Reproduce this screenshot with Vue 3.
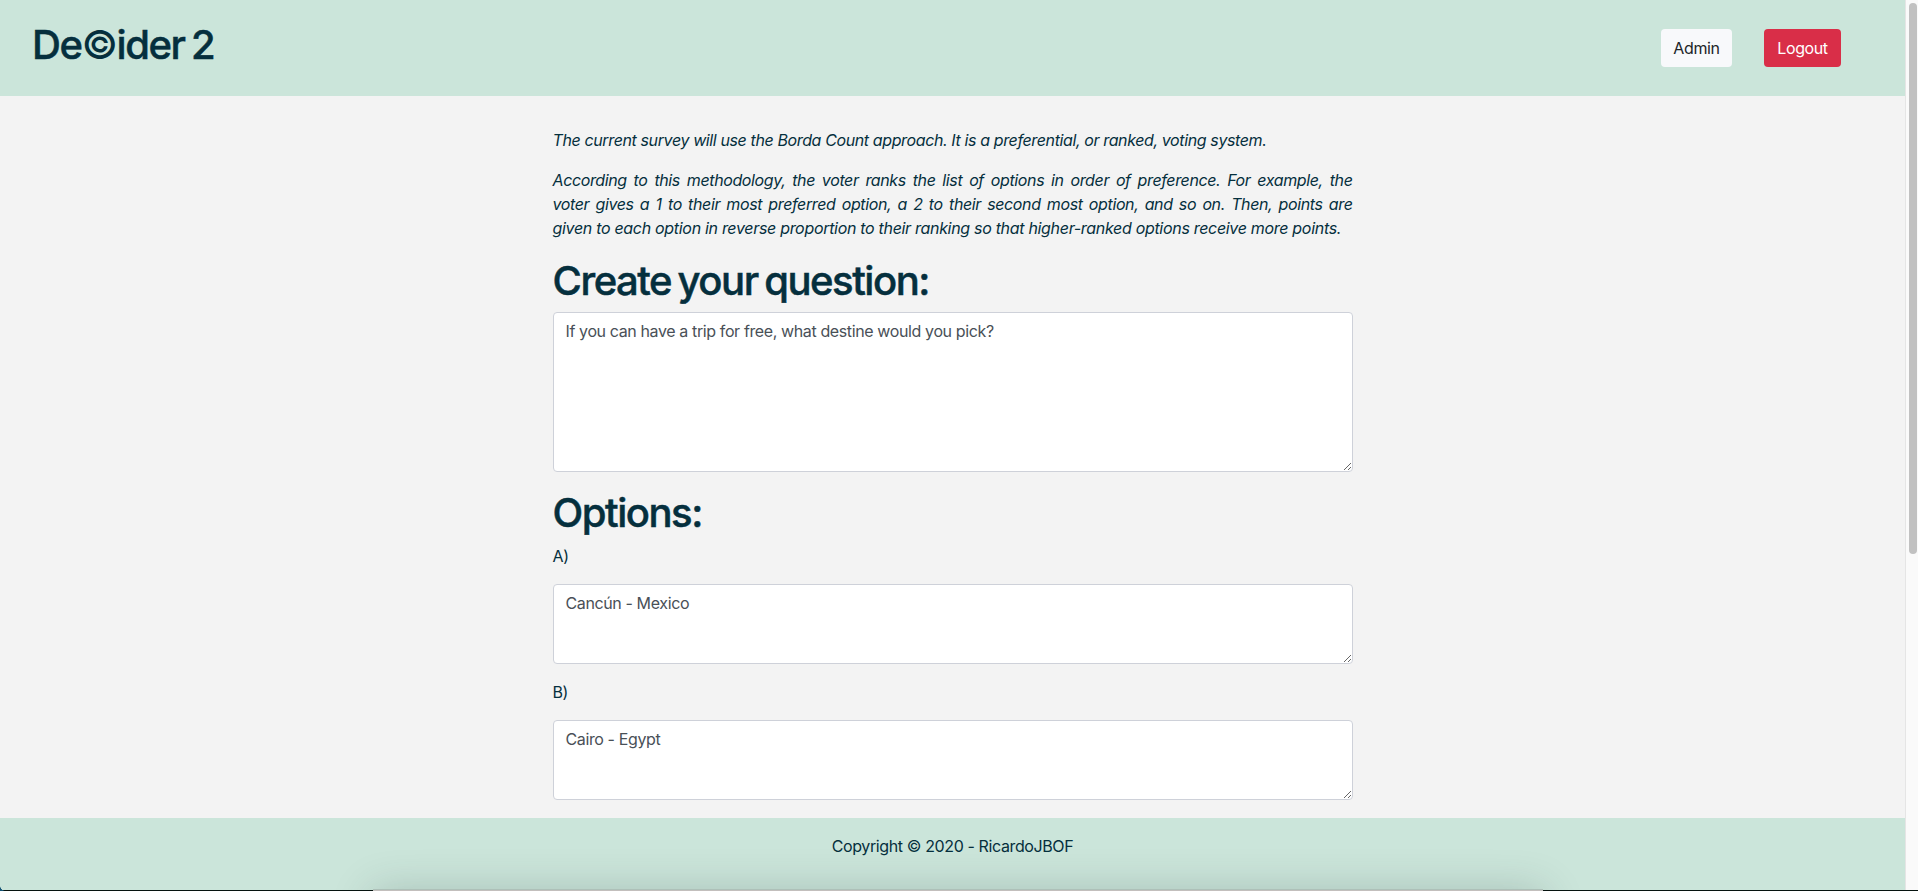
<script setup>
import { ref } from 'vue'

const question = ref('If you can have a trip for free, what destine would you pick?')
const options = ref([
  { label: 'A)', text: 'Cancún - Mexico' },
  { label: 'B)', text: 'Cairo - Egypt' },
])
</script>

<template>
  <div class="window">
    <div class="page">
      <header class="header">
        <h1 class="brand">De<span class="mark">©</span>ider 2</h1>
        <nav class="actions">
          <button class="btn btn-light"><span>Admin</span></button>
          <button class="btn btn-danger"><span>Logout</span></button>
        </nav>
      </header>
      <main class="content">
        <p class="intro">The current survey will use the Borda Count approach. It is a preferential, or ranked, voting system.</p>
        <p class="intro">
          <span class="line">According to this methodology, the voter ranks the list of options in order of preference. For example, the</span>
          <span class="line">voter gives a 1 to their most preferred option, a 2 to their second most option, and so on. Then, points are</span>
          <span class="line last">given to each option in reverse proportion to their ranking so that higher-ranked options receive more points.</span>
        </p>
        <h1 class="heading">Create your question:</h1>
        <textarea v-model="question" class="field field-large"></textarea>
        <h1 class="heading">Options:</h1>
        <template v-for="option in options" :key="option.label">
          <p class="label">{{ option.label }}</p>
          <textarea v-model="option.text" class="field"></textarea>
        </template>
      </main>
      <footer class="footer"><p>Copyright © 2020 - RicardoJBOF</p></footer>
    </div>
    <div class="track"><div class="thumb"></div></div>
    <div class="dock"></div>
    <div class="edge"></div>
    <div class="dock-top"></div>
    <div class="corner"></div>
  </div>
</template>

<style>
html,
body {
  overflow: hidden;
}
</style>

<style scoped>
* {
  box-sizing: border-box;
}
.window {
  position: relative;
  display: flex;
  width: 100vw;
  height: 891px;
  overflow: hidden;
  background: #f3f3f3;
  color: #052f3d;
  font-family: Inter, "Liberation Sans", sans-serif;
  font-size: 16px;
  line-height: 24px;
  letter-spacing: -0.38px;
}
.page {
  flex: 1;
  display: flex;
  flex-direction: column;
}
.header {
  display: flex;
  justify-content: space-between;
  align-items: center;
  height: 96px;
  padding: 0 64px 0 32px;
  background: #cbe5da;
}
h1,
p {
  margin: 0;
}
.brand,
.heading {
  font-size: 40px;
  font-weight: 500;
  line-height: 48px;
  letter-spacing: -1.45px;
  word-spacing: -2.8px;
  white-space: nowrap;
  -webkit-text-stroke: 0.5px currentColor;
}
.brand {
  padding-bottom: 6px;
}
.mark {
  -webkit-text-stroke: 0;
}
.actions {
  display: flex;
  gap: 32px;
}
.btn {
  height: 38px;
  padding: 0;
  border: 0;
  border-radius: 4px;
  font: inherit;
  letter-spacing: inherit;
}
.btn-light {
  width: 71px;
  background: #f8f9fb;
  color: #212529;
}
.btn-danger {
  width: 77px;
  background: #d92e48;
  color: #fff;
}
.content {
  display: flex;
  flex-direction: column;
  width: 800px;
  height: 722px;
  margin: 0 auto;
  padding-top: 32px;
}
.intro {
  margin-bottom: 16px;
  font-style: italic;
}
.line {
  display: block;
  white-space: nowrap;
  text-align: justify;
  text-align-last: justify;
}
.last {
  letter-spacing: -0.31px;
  text-align-last: left;
}
.heading {
  padding-top: 1px;
  margin-bottom: 7px;
}
.label {
  margin-bottom: 16px;
}
.field {
  display: block;
  flex: none;
  width: 100%;
  height: 80px;
  margin: 0 0 16px;
  padding: 6px 12px;
  border: 1px solid #ced1d9;
  border-radius: 4px;
  background: #fff;
  color: #495057;
  font: inherit;
  letter-spacing: inherit;
  resize: vertical;
}
.field-large {
  height: 160px;
}
.footer {
  flex: 1;
  padding-top: 16px;
  background: #cbe5da;
  text-align: center;
}
.track {
  width: 13px;
  padding: 3px 1px 0 3px;
  border-left: 1px solid #e5e5e5;
  background: #fafafa;
}
.thumb {
  height: 551px;
  border-radius: 4px;
  background: #c1c1c1;
}
.dock {
  position: absolute;
  top: 891px;
  left: 373px;
  width: 1170px;
  height: 60px;
  box-shadow: 0 0 42px rgba(40, 60, 60, 0.23);
}
.edge {
  position: absolute;
  left: 0;
  bottom: 0;
  width: 100%;
  height: 1px;
  background: #06130f;
}
.dock-top {
  position: absolute;
  left: 373px;
  bottom: 0;
  width: 1170px;
  height: 2px;
  border-top: 1px solid #adc0b8;
  background: #c3bfbd;
}
.corner {
  position: absolute;
  left: 0;
  bottom: 0;
  width: 5px;
  height: 5px;
  background: radial-gradient(circle at 100% 0, transparent 4.5px, #155474 5px);
}
</style>
